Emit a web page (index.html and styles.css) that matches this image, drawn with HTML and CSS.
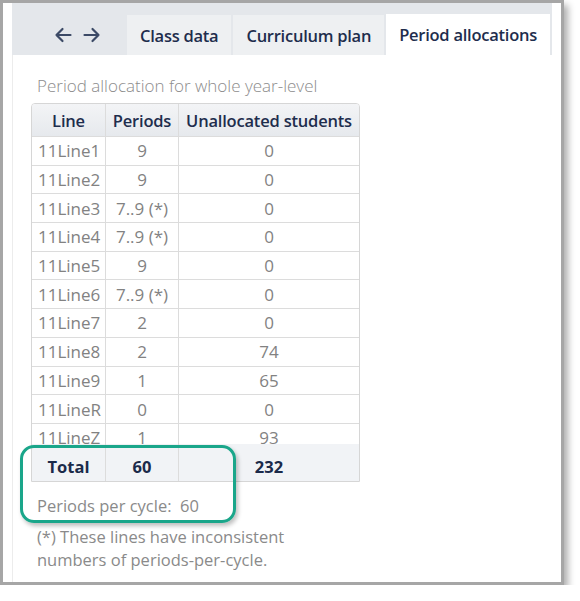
FILE: index.html
```html
<!DOCTYPE html>
<html>
<head>
<meta charset="utf-8">
<link rel="stylesheet" href="styles.css">
</head>
<body>
<div class="frame">
  <div class="tabbar">
    <div class="nav">
      <svg class="arrow" width="18" height="16" viewBox="0 0 18 16"><path d="M16.5 8H2.5M8.5 2L2.5 8L8.5 14" fill="none" stroke="#3c4a66" stroke-width="2.2" stroke-linecap="round" stroke-linejoin="round"/></svg>
      <svg class="arrow" width="18" height="16" viewBox="0 0 18 16"><path d="M1.5 8H15.5M9.5 2L15.5 8L9.5 14" fill="none" stroke="#3c4a66" stroke-width="2.2" stroke-linecap="round" stroke-linejoin="round"/></svg>
    </div>
    <div class="tab">Class data</div>
    <div class="tab">Curriculum plan</div>
    <div class="tab active">Period allocations</div>
  </div>
  <div class="panel">
    <p class="caption">Period allocation for whole year-level</p>
    <div class="grid">
      <div class="row head"><div class="c1">Line</div><div class="c2">Periods</div><div class="c3">Unallocated students</div></div>
      <div class="row"><div class="c1 left">11Line1</div><div class="c2">9</div><div class="c3">0</div></div>
      <div class="row"><div class="c1 left">11Line2</div><div class="c2">9</div><div class="c3">0</div></div>
      <div class="row"><div class="c1 left">11Line3</div><div class="c2">7..9 (*)</div><div class="c3">0</div></div>
      <div class="row"><div class="c1 left">11Line4</div><div class="c2">7..9 (*)</div><div class="c3">0</div></div>
      <div class="row"><div class="c1 left">11Line5</div><div class="c2">9</div><div class="c3">0</div></div>
      <div class="row"><div class="c1 left">11Line6</div><div class="c2">7..9 (*)</div><div class="c3">0</div></div>
      <div class="row"><div class="c1 left">11Line7</div><div class="c2">2</div><div class="c3">0</div></div>
      <div class="row"><div class="c1 left">11Line8</div><div class="c2">2</div><div class="c3">74</div></div>
      <div class="row"><div class="c1 left">11Line9</div><div class="c2">1</div><div class="c3">65</div></div>
      <div class="row"><div class="c1 left">11LineR</div><div class="c2">0</div><div class="c3">0</div></div>
      <div class="row clipped"><div class="c1 left">11LineZ</div><div class="c2">1</div><div class="c3">93</div></div>
      <div class="row total"><div class="c1">Total</div><div class="c2">60</div><div class="c3">232</div></div>
    </div>
    <p class="ppc">Periods per cycle:&nbsp; 60</p>
    <p class="note">(*) These lines have inconsistent<br>numbers of periods-per-cycle.</p>
  </div>
  <div class="highlight"></div>
</div>
</body>
</html>
```
FILE: styles.css
```css
html, body {
  margin: 0;
  padding: 0;
  background: #ffffff;
}
body {
  font-family: "Open Sans", "Noto Sans", sans-serif;
}
.frame {
  position: relative;
  box-sizing: border-box;
  width: 564px;
  height: 585px;
  border: 3px solid #a6a6a6;
  background: #ffffff;
  box-shadow: 4px 5px 7px rgba(0, 0, 0, 0.32);
  padding: 0 9px;
  display: flex;
  flex-direction: column;
}
.tabbar {
  height: 52px;
  background: #e4e7eb;
  display: flex;
  align-items: flex-end;
  gap: 2px;
}
.nav {
  flex: 0 0 113px;
  height: 40px;
  display: flex;
  align-items: center;
  justify-content: flex-end;
  gap: 11px;
  padding-right: 24px;
  box-sizing: border-box;
}
.arrow { display: block; }
.tab {
  flex: 0 0 auto;
  height: 40px;
  padding: 0 13px;
  display: flex;
  align-items: center;
  white-space: nowrap;
  background: #eef0f2;
  color: #1e2d4d;
  font-size: 16.5px;
  font-weight: 600;
  letter-spacing: -0.25px;
}
.tab.active {
  background: #ffffff;
  height: 41px;
}
.panel {
  flex: 1;
  border-left: 1px solid #ececec;
  padding: 19px 0 0 18px;
}
.caption {
  margin: 0 0 6px 6px;
  font-size: 17px;
  line-height: 23px;
  color: #8c8c8c;
  font-weight: 300;
}
.grid {
  width: 327px;
  border: 1px solid #d6d6d6;
  border-radius: 4px 4px 0 0;
  overflow: hidden;
}
.row {
  display: grid;
  grid-template-columns: 73px 73px 1fr;
  height: 28.7px;
  border-top: 1px solid #dcdcdc;
  box-sizing: border-box;
  font-size: 17px;
  color: #828282;
}
.row > div {
  display: flex;
  align-items: center;
  justify-content: center;
  overflow: hidden;
  white-space: nowrap;
}
.row > div + div { border-left: 1px solid #dcdcdc; }
.row .left { justify-content: flex-start; padding-left: 6px; }
.head {
  border-top: none;
  height: 32px;
  background: linear-gradient(#f3f4f6, #e6e9ed);
  color: #1e2d4d;
  font-weight: 600;
  font-size: 16.5px;
  letter-spacing: -0.2px;
}
.clipped {
  height: 21px;
  align-items: start;
}
.clipped > div { height: 28px; }
.total {
  height: 37px;
  background: #f1f3f6;
  color: #1b2a4a;
  font-weight: 700;
  font-size: 16.5px;
  border-top: none;
}
.total > div { padding-top: 9px; }
.ppc {
  margin: 13px 0 0 6px;
  font-size: 16.5px;
  line-height: 22px;
  color: #8a8a8a;
}
.note {
  margin: 8px 0 0 6px;
  font-size: 16.5px;
  line-height: 23px;
  color: #8a8a8a;
}
.highlight {
  position: absolute;
  left: 17px;
  top: 442px;
  width: 216px;
  height: 78px;
  box-sizing: border-box;
  border: 3px solid #1aa68a;
  border-radius: 14px;
  box-shadow: 2px 3px 4px rgba(0, 0, 0, 0.25);
}
```
